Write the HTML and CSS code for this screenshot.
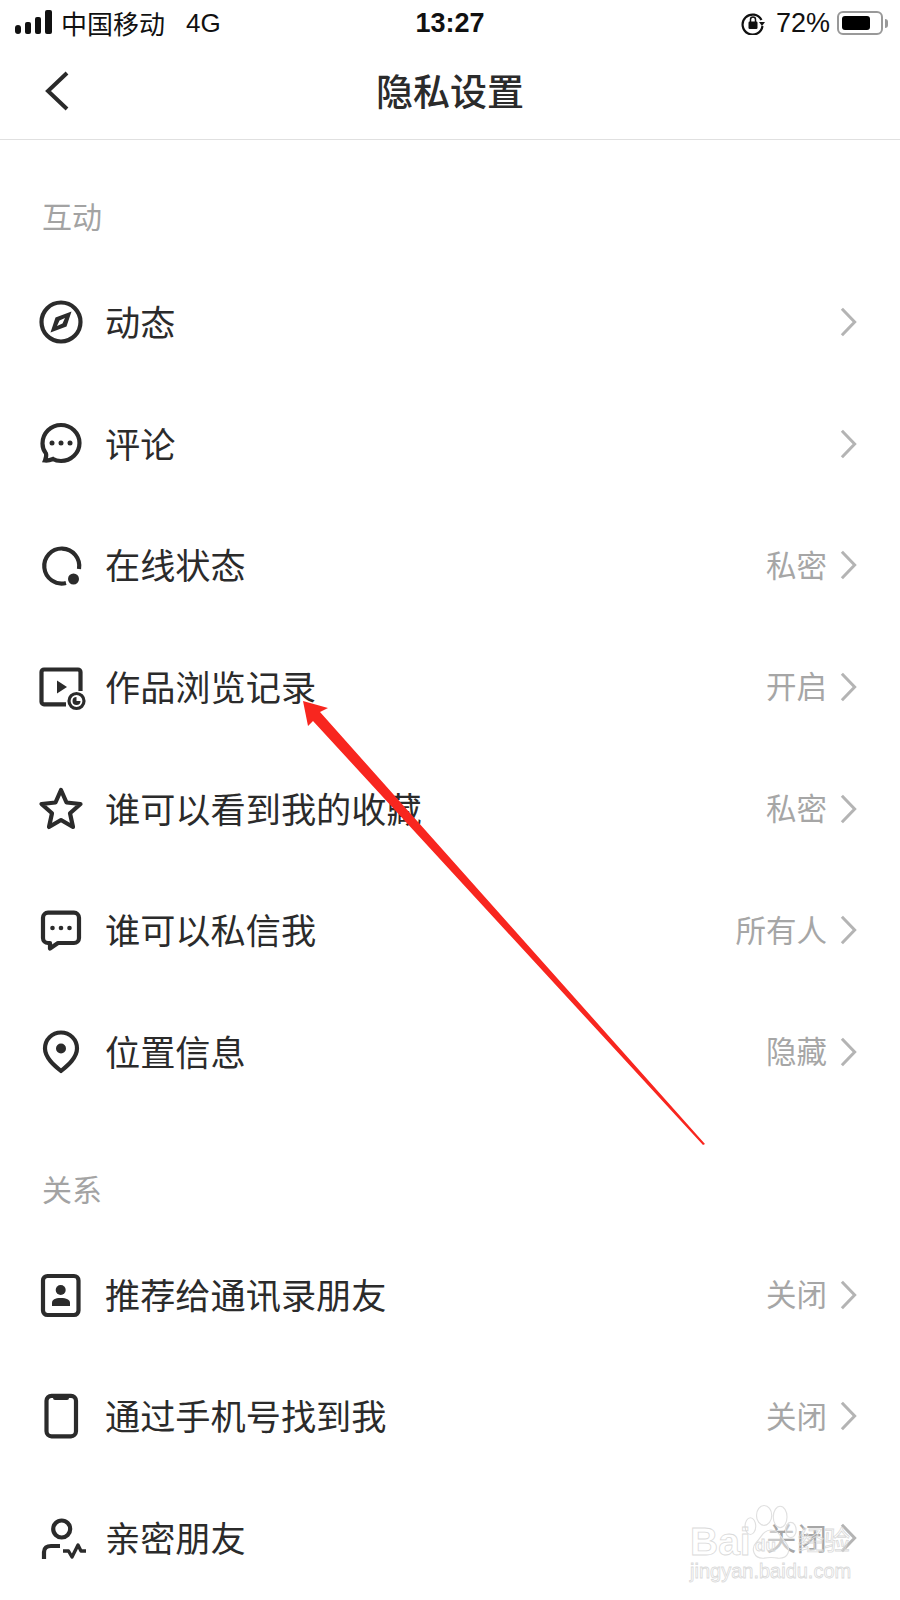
FILE: index.html
```html
<!DOCTYPE html>
<html lang="zh-CN">
<head>
    <meta charset="UTF-8">
    <meta name="viewport" content="width=device-width, initial-scale=1.0">
    <title>隐私设置</title>
    <link rel="stylesheet" href="styles.css">
</head>
<body>
    <div class="page">
        <!-- status bar -->
        <div class="status-bar">
            <div class="status-left">
                <svg class="signal" width="38" height="26" viewBox="0 0 38 26">
                    <rect x="0" y="15" width="6" height="9" rx="3"/>
                    <rect x="10" y="12" width="6" height="12" rx="2"/>
                    <rect x="20" y="7" width="6" height="17" rx="2"/>
                    <rect x="30" y="0" width="7" height="24" rx="2"/>
                </svg>
                <span class="carrier">中国移动</span>
                <span class="network">4G</span>
            </div>
            <div class="status-time">13:27</div>
            <div class="status-right">
                <svg class="rotate-lock" width="24" height="24" viewBox="0 0 24 24">
                    <path d="M20.5 9 A10 10 0 1 0 21.5 15" fill="none" stroke="#111" stroke-width="2.2"/>
                    <path d="M18 11 L24 11 L21 15 Z" fill="#111"/>
                    <rect x="7.5" y="10.5" width="9" height="7.5" rx="1.2" fill="#111"/>
                    <path d="M9.5 11 V8.5 a2.5 2.5 0 0 1 5 0 V11" fill="none" stroke="#111" stroke-width="1.5"/>
                </svg>
                <span class="battery-text">72%</span>
                <div class="battery"><div class="battery-fill"></div></div>
                <div class="battery-nub"></div>
            </div>
        </div>

        <!-- nav -->
        <div class="nav">
            <svg class="back" width="26" height="42" viewBox="0 0 26 42">
                <path d="M23 3 L4 21 L23 39" fill="none" stroke="#2a2a2a" stroke-width="4"/>
            </svg>
            <h1>隐私设置</h1>
        </div>

        <div class="section-title">互动</div>

        <div class="row">
            <svg class="icon" viewBox="0 0 44 44">
                <circle cx="22" cy="22" r="19.5" class="line"/>
                <path d="M32.5 11.500 L27.500 26.500 L11.500 32.500 L16.500 17.500 Z M26 18 L20.500 20.500 L18 26 L23.500 23.500 Z" class="solid" fill-rule="evenodd"/>
            </svg>
            <span class="label">动态</span>
            <svg class="chevron" viewBox="0 0 18 32"><path d="M2 2 L15.5 16 L2 30"/></svg>
        </div>
        <div class="row">
            <svg class="icon" viewBox="0 0 44 44">
                <path d="M6 38.5 C7 36 7.6 33.5 7 31.5 C4.5 28.5 3.5 25 3.5 21.5 C3.5 11 12 3 22 3 C32 3 40.5 11 40.5 21 C40.5 31 32 39 22 39 C18.5 39 16 38.3 14 37 C11 38.3 8.5 38.7 6 38.5 Z" class="line"/>
                <circle cx="13" cy="21" r="2.5" class="solid"/>
                <circle cx="22" cy="21" r="2.5" class="solid"/>
                <circle cx="31" cy="21" r="2.5" class="solid"/>
            </svg>
            <span class="label">评论</span>
            <svg class="chevron" viewBox="0 0 18 32"><path d="M2 2 L15.5 16 L2 30"/></svg>
        </div>
        <div class="row">
            <svg class="icon" viewBox="0 0 44 44">
                <path d="M27 40 A17.5 17.5 0 1 1 40 26" class="line"/>
                <circle cx="34.5" cy="36" r="5.5" class="solid"/>
            </svg>
            <span class="label">在线状态</span>
            <span class="value">私密</span>
            <svg class="chevron" viewBox="0 0 18 32"><path d="M2 2 L15.5 16 L2 30"/></svg>
        </div>
        <div class="row">
            <svg class="icon" viewBox="0 0 44 44">
                <path d="M27 39.3 H5 a2.5 2.5 0 0 1 -2.5 -2.5 V7 a2.5 2.5 0 0 1 2.5 -2.5 H39 a2.5 2.5 0 0 1 2.5 2.5 V26" class="line"/>
                <path d="M18 15.5 L28 22 L18 28.5 Z" class="solid"/>
                <circle cx="37.5" cy="36" r="7.5" class="line thin"/>
                <path d="M37.5 32 V36 H41.500 A4 4 0 1 1 37.5 32 Z" class="solid"/>
            </svg>
            <span class="label">作品浏览记录</span>
            <span class="value">开启</span>
            <svg class="chevron" viewBox="0 0 18 32"><path d="M2 2 L15.5 16 L2 30"/></svg>
        </div>
        <div class="row">
            <svg class="icon" viewBox="0 0 44 44">
                <path d="M22 3 L27.5 15.5 L41.5 17 L31 26.3 L34 40 L22 33 L10 40 L13 26.3 L2.5 17 L16.5 15.5 Z" class="line join"/>
            </svg>
            <span class="label">谁可以看到我的收藏</span>
            <span class="value">私密</span>
            <svg class="chevron" viewBox="0 0 18 32"><path d="M2 2 L15.5 16 L2 30"/></svg>
        </div>
        <div class="row">
            <svg class="icon" viewBox="0 0 44 44">
                <path d="M9 4.7 H35 a5 5 0 0 1 5 5 V30 a5 5 0 0 1 -5 5 H19 L11 40.5 V35 H9 a5 5 0 0 1 -5 -5 V9.7 a5 5 0 0 1 5 -5 Z" class="line join"/>
                <circle cx="13.5" cy="20" r="2.3" class="solid"/>
                <circle cx="22" cy="20" r="2.3" class="solid"/>
                <circle cx="30.5" cy="20" r="2.3" class="solid"/>
            </svg>
            <span class="label">谁可以私信我</span>
            <span class="value">所有人</span>
            <svg class="chevron" viewBox="0 0 18 32"><path d="M2 2 L15.5 16 L2 30"/></svg>
        </div>
        <div class="row">
            <svg class="icon" viewBox="0 0 44 44">
                <path d="M22 41 C16 36 6 28 6 18.5 C6 9.5 13 2.5 22 2.5 C31 2.5 38 9.5 38 18.5 C38 28 28 36 22 41 Z" class="line join"/>
                <circle cx="22" cy="18.5" r="5" class="solid"/>
            </svg>
            <span class="label">位置信息</span>
            <span class="value">隐藏</span>
            <svg class="chevron" viewBox="0 0 18 32"><path d="M2 2 L15.5 16 L2 30"/></svg>
        </div>

        <div class="section-title">关系</div>

        <div class="row">
            <svg class="icon" viewBox="0 0 44 44">
                <rect x="4" y="3" width="35.500" height="39" rx="4.500" class="line"/>
                <circle cx="21.700" cy="17" r="5" class="solid"/>
                <path d="M13 33 V30 C13 26.500 16 25 21.700 25 C27.500 25 31 26.500 31 30 V33 Z" class="solid"/>
            </svg>
            <span class="label">推荐给通讯录朋友</span>
            <span class="value">关闭</span>
            <svg class="chevron" viewBox="0 0 18 32"><path d="M2 2 L15.5 16 L2 30"/></svg>
        </div>
        <div class="row">
            <svg class="icon" viewBox="0 0 44 44">
                <rect x="7.500" y="1.800" width="29.500" height="40.500" rx="5" class="line"/>
                <path d="M14 2 H30 V4 a2 2 0 0 1 -2 2 H16 a2 2 0 0 1 -2 -2 Z" class="solid"/>
            </svg>
            <span class="label">通过手机号找到我</span>
            <span class="value">关闭</span>
            <svg class="chevron" viewBox="0 0 18 32"><path d="M2 2 L15.5 16 L2 30"/></svg>
        </div>
        <div class="row">
            <svg class="icon" viewBox="0 0 44 44">
                <circle cx="22.700" cy="13" r="8.500" class="line"/>
                <path d="M5 43 V36 C5 32 8 30 12 30 H21" class="line"/>
                <path d="M24 35 H29.500 L33 41 L39 29 L42 35 H47" class="line thin-join"/>
            </svg>
            <span class="label">亲密朋友</span>
            <span class="value">关闭</span>
            <svg class="chevron" viewBox="0 0 18 32"><path d="M2 2 L15.5 16 L2 30"/></svg>
        </div>

        <!-- red annotation arrow, sits over the list -->
        <svg class="arrow" width="900" height="1600" viewBox="0 0 900 1600">
            <path d="M303 701 L328 708 L320 712 L705 1144 L703 1145 L313 721 L308 726 Z" fill="#f8261f"/>
        </svg>

        <!-- watermark -->
        <div class="watermark">
            <svg class="paw" width="54" height="58" viewBox="0 0 70 76">
                <ellipse cx="26" cy="15" rx="10" ry="13"/>
                <ellipse cx="47" cy="17" rx="9" ry="14"/>
                <ellipse cx="8" cy="29" rx="7" ry="11"/>
                <ellipse cx="61" cy="34" rx="7" ry="10"/>
                <path d="M35 34 C25 34 22 44 16 50 C8 58 12 72 26 71 C31 70 39 70 44 71 C58 72 62 60 54 50 C48 44 45 34 35 34 Z"/>
            </svg>
            <span class="wm-bai">Bai</span>
            <span class="wm-du">du</span>
            <span class="wm-jy">经验</span>
            <span class="wm-url">jingyan.baidu.com</span>
        </div>
    </div>
</body>
</html>
```

FILE: styles.css
```css
* { box-sizing: border-box; }
body { margin: 0; background-color: #fff; font-family: "Noto Sans CJK SC", "Liberation Sans", sans-serif; color: #2b2b2b; }
.page { position: relative; width: 900px; height: 1600px; overflow: hidden; background-color: #fff; }

.status-bar { height: 46px; padding: 0 15px; display: grid; grid-template-columns: 1fr auto 1fr; align-items: center; color: #111; font-size: 26px; }
.status-left { display: flex; align-items: center; }
.signal { fill: #111; margin-right: 8px; }
.carrier { line-height: 46px; }
.network { margin-left: 21px; font-family: "Liberation Sans", sans-serif; }
.status-time { font-family: "Liberation Sans", sans-serif; font-weight: 700; font-size: 27px; }
.status-right { display: flex; align-items: center; justify-content: flex-end; margin-right: -3px; }
.rotate-lock { margin-right: 11px; }
.battery-text { font-family: "Liberation Sans", sans-serif; font-size: 27px; margin-right: 7px; }
.battery { width: 46px; height: 24px; padding: 3px; border: 2px solid #999; border-radius: 6px; }
.battery-fill { width: 28px; height: 100%; background-color: #000; border-radius: 3px; }
.battery-nub { width: 3px; height: 9px; margin-left: 2px; background-color: #999; border-radius: 0 3px 3px 0; }

.nav { height: 94px; display: flex; align-items: center; justify-content: center; position: relative; border-bottom: 1px solid #e0e0e0; }
.nav h1 { margin: 0 0 6px; font-size: 37px; font-weight: 500; color: #2b2b2b; }
.back { position: absolute; left: 44px; top: 24px; }

.section-title { height: 121px; padding: 53px 0 0 42px; font-size: 30px; line-height: 44px; color: #a3a3a3; }

.row { height: 121.7px; padding: 0 43px 0 39px; display: flex; align-items: center; }
.icon { width: 44px; height: 44px; flex: none; margin-right: 22px; overflow: visible; }
.line { fill: none; stroke: #2b2b2b; stroke-width: 4.2; }
.line.thin { stroke-width: 3.2; fill: #fff; }
.line.join { stroke-linejoin: round; }
.line.thin-join { stroke-width: 3.4; stroke-linejoin: round; }
.solid { fill: #2b2b2b; }
.label { flex: 1; font-size: 35.2px; line-height: 48px; margin-bottom: 2px; white-space: nowrap; }
.value { font-size: 30.5px; line-height: 44px; margin-bottom: 3px; color: #a6a6a6; margin-right: 13px; }
.chevron { width: 17px; height: 32px; flex: none; fill: none; stroke: #b4b4b4; stroke-width: 3.2; }

.arrow { position: absolute; left: 0; top: 0; }

.watermark { position: absolute; left: 0; top: 0; width: 900px; height: 1600px; color: transparent; font-family: "Liberation Sans", sans-serif; }
.paw { position: absolute; left: 744px; top: 1504px; fill: rgba(255, 255, 255, 0.4); stroke: #e0e0e0; stroke-width: 1.5; }
.watermark span { position: absolute; line-height: 1; -webkit-text-stroke: 0.8px #dadada; }
.wm-bai { left: 690px; top: 1522px; font-size: 39px; font-weight: 700; }
.wm-du { left: 755px; top: 1537px; font-size: 17px; font-weight: 700; }
.wm-jy { left: 798px; top: 1526px; font-family: "Noto Sans CJK SC", sans-serif; font-size: 26px; }
.wm-url { left: 690px; top: 1561px; font-size: 20px; }
```
